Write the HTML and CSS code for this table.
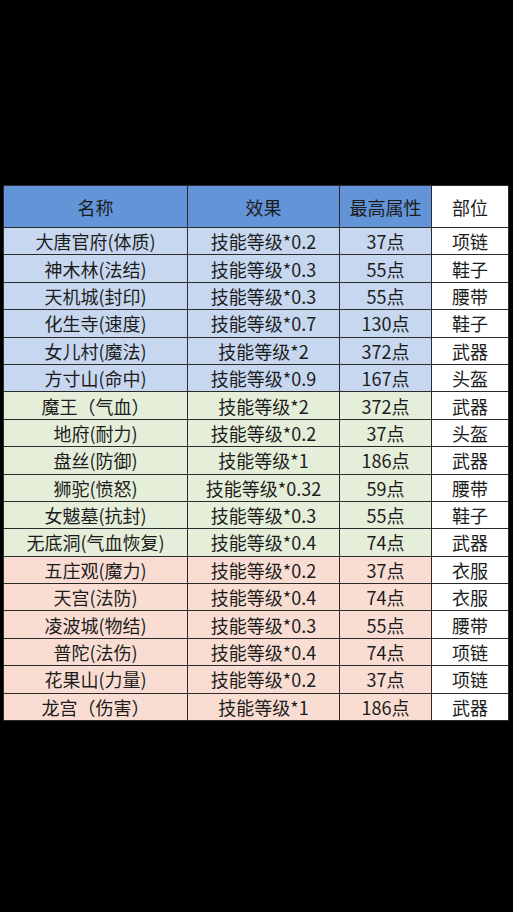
FILE: index.html
```html
<!DOCTYPE html>
<html lang="zh">
<head>
<meta charset="utf-8">
<link rel="stylesheet" href="styles.css">
</head>
<body>
<div class="sheet">
  <div class="c hd">名称</div><div class="c hd">效果</div><div class="c hd">最高属性</div><div class="c w">部位</div>

  <div class="c b">大唐官府(体质)</div><div class="c b">技能等级*0.2</div><div class="c b">37点</div><div class="c w">项链</div>
  <div class="c b">神木林(法结)</div><div class="c b">技能等级*0.3</div><div class="c b">55点</div><div class="c w">鞋子</div>
  <div class="c b">天机城(封印)</div><div class="c b">技能等级*0.3</div><div class="c b">55点</div><div class="c w">腰带</div>
  <div class="c b">化生寺(速度)</div><div class="c b">技能等级*0.7</div><div class="c b">130点</div><div class="c w">鞋子</div>
  <div class="c b">女儿村(魔法)</div><div class="c b">技能等级*2</div><div class="c b">372点</div><div class="c w">武器</div>
  <div class="c b">方寸山(命中)</div><div class="c b">技能等级*0.9</div><div class="c b">167点</div><div class="c w">头盔</div>

  <div class="c g">魔王（气血）</div><div class="c g">技能等级*2</div><div class="c g">372点</div><div class="c w">武器</div>
  <div class="c g">地府(耐力)</div><div class="c g">技能等级*0.2</div><div class="c g">37点</div><div class="c w">头盔</div>
  <div class="c g">盘丝(防御)</div><div class="c g">技能等级*1</div><div class="c g">186点</div><div class="c w">武器</div>
  <div class="c g">狮驼(愤怒)</div><div class="c g">技能等级*0.32</div><div class="c g">59点</div><div class="c w">腰带</div>
  <div class="c g">女魃墓(抗封)</div><div class="c g">技能等级*0.3</div><div class="c g">55点</div><div class="c w">鞋子</div>
  <div class="c g">无底洞(气血恢复)</div><div class="c g">技能等级*0.4</div><div class="c g">74点</div><div class="c w">武器</div>

  <div class="c p">五庄观(魔力)</div><div class="c p">技能等级*0.2</div><div class="c p">37点</div><div class="c w">衣服</div>
  <div class="c p">天宫(法防)</div><div class="c p">技能等级*0.4</div><div class="c p">74点</div><div class="c w">衣服</div>
  <div class="c p">凌波城(物结)</div><div class="c p">技能等级*0.3</div><div class="c p">55点</div><div class="c w">腰带</div>
  <div class="c p">普陀(法伤)</div><div class="c p">技能等级*0.4</div><div class="c p">74点</div><div class="c w">项链</div>
  <div class="c p">花果山(力量)</div><div class="c p">技能等级*0.2</div><div class="c p">37点</div><div class="c w">项链</div>
  <div class="c p">龙宫（伤害）</div><div class="c p">技能等级*1</div><div class="c p">186点</div><div class="c w">武器</div>
</div>
</body>
</html>
```

FILE: styles.css
```css
html, body {
  margin: 0;
  padding: 0;
  background: #000;
  width: 513px;
  height: 912px;
  overflow: hidden;
}

.sheet {
  margin: 185px 0 0 3px;
  width: 506px;
  box-sizing: border-box;
  display: grid;
  grid-template-columns: 183px 151px 91px 76px;
  grid-template-rows: 41px repeat(18, 26.4px);
  gap: 1px;
  padding: 1px;
  background: #2b2b2b;
  font-family: "Noto Sans CJK SC", "Noto Sans", sans-serif;
  font-size: 18px;
  color: #1c1c1c;
}

.c {
  display: flex;
  align-items: center;
  justify-content: center;
  white-space: nowrap;
  line-height: 1;
}

.hd { background: #6494d8; }
.w  { background: #ffffff; }
.b  { background: #c6d7ef; }
.g  { background: #e4eed8; }
.p  { background: #f9ddd2; }
```
